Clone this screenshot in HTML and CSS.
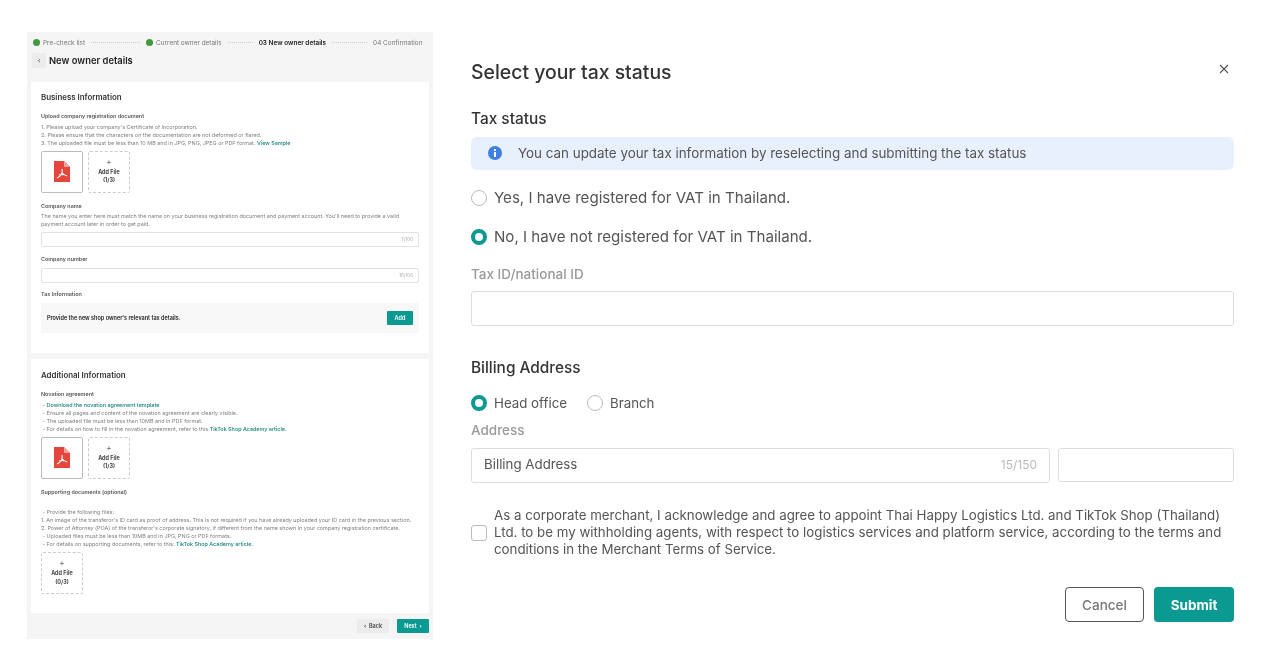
FILE: index.html

```html
<!DOCTYPE html>
<html lang="en">
<head>
  <meta charset="UTF-8">
  <title>Select your tax status</title>
  <link rel="stylesheet" href="styles.css">
</head>
<body>
  <div class="page">
    <section class="owner">
      <div class="steps">
        <span class="step done"><i class="tick"></i>Pre-check list</span>
        <span class="dots d1"></span>
        <span class="step done"><i class="tick"></i>Current owner details</span>
        <span class="dots d2"></span>
        <span class="step current">03 New owner details</span>
        <span class="dots d3"></span>
        <span class="step">04 Confirmation</span>
      </div>
      <div class="owner-head">
        <span class="back-box">‹</span>
        <h2>New owner details</h2>
      </div>

      <div class="card card-one">
        <h3>Business Information</h3>
        <p class="lbl up-lbl">Upload company registration document</p>
        <p class="hint">1. Please upload your company's Certificate of Incorporation.<br>2. Please ensure that the characters on the documentation are not deformed or flared.<br>3. The uploaded file must be less than 10 MB and in JPG, PNG, JPEG or PDF format. <a>View Sample</a></p>
        <div class="files">
          <div class="file">
            <svg class="pdf" viewBox="0 0 16 21"><path d="M0 0h10l6 6v15H0z" fill="#e5463b"/><path d="M10 0l6 6h-6z" fill="#f2a49d"/><path d="M8 8c.5 2 .5 3.5-.8 5.5S5 16.500 3 17M8.300 12c1 1.500 2.500 2.500 5 3M5 13.800h6" fill="none" stroke="#fff" stroke-width="1.100"/></svg>
          </div>
          <div class="add"><b>+</b><span>Add File<br>(1/3)</span></div>
        </div>
        <p class="lbl name-lbl">Company name</p>
        <p class="hint name-hint">The name you enter here must match the name on your business registration document and payment account. You'll need to provide a valid payment account later in order to get paid.</p>
        <div class="mini-input name-input"><span>7/100</span></div>
        <p class="lbl num-lbl">Company number</p>
        <div class="mini-input num-input"><span>16/100</span></div>
        <p class="lbl tax-lbl">Tax Information</p>
        <div class="tax-row">
          <span>Provide the new shop owner's relevant tax details.</span>
          <button class="mini-add">Add</button>
        </div>
      </div>

      <div class="card card-two">
        <h3>Additional Information</h3>
        <p class="lbl up-lbl">Novation agreement</p>
        <p class="hint">&nbsp;- <a>Download the novation agreement template</a><br>&nbsp;- Ensure all pages and content of the novation agreement are clearly visible.<br>&nbsp;- The uploaded file must be less than 10MB and in PDF format.<br>&nbsp;- For details on how to fill in the novation agreement, refer to this <a>TikTok Shop Academy article.</a></p>
        <div class="files">
          <div class="file">
            <svg class="pdf" viewBox="0 0 16 21"><path d="M0 0h10l6 6v15H0z" fill="#e5463b"/><path d="M10 0l6 6h-6z" fill="#f2a49d"/><path d="M8 8c.5 2 .5 3.5-.8 5.5S5 16.500 3 17M8.300 12c1 1.500 2.500 2.500 5 3M5 13.800h6" fill="none" stroke="#fff" stroke-width="1.100"/></svg>
          </div>
          <div class="add"><b>+</b><span>Add File<br>(1/3)</span></div>
        </div>
        <p class="lbl sup-lbl">Supporting documents (optional)</p>
        <p class="hint sup-hint">&nbsp;- Provide the following files:<br>1. An image of the transferor's ID card as proof of address. This is not required if you have already uploaded your ID card in the previous section.<br>2. Power of Attorney (POA) of the transferor's corporate signatory, if different from the name shown in your company registration certificate.<br>&nbsp;- Uploaded files must be less than 10MB and in JPG, PNG or PDF formats.<br>&nbsp;- For details on supporting documents, refer to this: <a>TikTok Shop Academy article.</a></p>
        <div class="files">
          <div class="add"><b>+</b><span>Add File<br>(0/3)</span></div>
        </div>
      </div>

      <div class="owner-foot">
        <button class="btn-back">‹&nbsp; Back</button>
        <button class="btn-next">Next &nbsp;›</button>
      </div>
    </section>

    <section class="modal">
      <div class="modal-head">
        <h1>Select your tax status</h1>
        <svg class="close" viewBox="0 0 10 10"><path d="M1 1l8 8M9 1l-8 8" stroke="#555" stroke-width="1.100" fill="none"/></svg>
      </div>
      <h4 class="tax-title">Tax status</h4>
      <div class="notice">
        <svg class="info" viewBox="0 0 14 14"><circle cx="7" cy="7" r="7" fill="#3d7fe6"/><rect x="6" y="6" width="2" height="5" fill="#fff"/><rect x="6" y="3" width="2" height="2" fill="#fff"/></svg>
        <span>You can update your tax information by reselecting and submitting the tax status</span>
      </div>
      <label class="radio-line yes"><i class="radio"></i>Yes, I have registered for VAT in Thailand.</label>
      <label class="radio-line no"><i class="radio on"></i>No, I have not registered for VAT in Thailand.</label>
      <p class="field-lbl id-lbl">Tax ID/national ID</p>
      <div class="input id-input"></div>
      <h4 class="bill-title">Billing Address</h4>
      <div class="office">
        <label class="radio-line"><i class="radio on"></i>Head office</label>
        <label class="radio-line"><i class="radio"></i>Branch</label>
      </div>
      <p class="field-lbl addr-lbl">Address</p>
      <div class="addr-row">
        <div class="input addr-main"><span>Billing Address</span><em>15/150</em></div>
        <div class="input addr-side"></div>
      </div>
      <div class="agree">
        <i class="check"></i>
        <p>As a corporate merchant, I acknowledge and agree to appoint Thai Happy Logistics Ltd. and TikTok Shop (Thailand) Ltd. to be my withholding agents, with respect to logistics services and platform service, according to the terms and conditions in the Merchant Terms of Service.</p>
      </div>
      <div class="actions">
        <button class="cancel">Cancel</button>
        <button class="submit">Submit</button>
      </div>
    </section>
  </div>
</body>
</html>
```

FILE: styles.css

```css
* {
  box-sizing: border-box;
}
body {
  margin: 0;
  background: #fff;
  font-family: Inter, "Liberation Sans", sans-serif;
  color: #333;
}
p, h1, h2, h3, h4 {
  margin: 0;
}
a {
  color: #0f7f7a;
  font-weight: 600;
}
.page {
  display: flex;
  align-items: flex-start;
  height: 671px;
  overflow: hidden;
  padding: 32px 0 0 27px;
  filter: blur(.3px);
}

/* left: shrunken screenshot of the wizard */
.owner {
  width: 406px;
  height: 607px;
  flex: none;
  background: #f5f5f5;
  padding: 0 4px;
  filter: blur(.2px);
}
.steps {
  display: flex;
  align-items: center;
  height: 21px;
  padding-left: 2px;
  font-size: 6.450px;
  color: #777;
}
.step {
  display: flex;
  align-items: center;
  white-space: nowrap;
}
.step.current {
  color: #222;
  font-weight: 600;
}
.tick {
  width: 7px;
  height: 7px;
  border-radius: 50%;
  background: #3f9a3c;
  margin-right: 3px;
}
.dots {
  border-top: 1px dotted #ccc;
  height: 0;
  margin: 0 6px;
}
.d1 { width: 49px; }
.d2 { width: 25px; }
.d3 { width: 35px; }
.owner-head {
  display: flex;
  align-items: center;
  height: 14px;
  gap: 3px;
  padding-left: 1px;
}
.back-box {
  width: 14px;
  height: 15px;
  background: #ececec;
  font-size: 7px;
  color: #555;
  text-align: center;
  line-height: 15px;
}
.owner-head h2 {
  font-size: 9.400px;
  font-weight: 600;
  color: #222;
}
.card {
  background: #fff;
  padding: 0 10px;
}
.card-one {
  height: 271px;
  margin-top: 15px;
  padding-top: 10px;
}
.card-two {
  height: 254px;
  margin-top: 6px;
  padding-top: 11px;
}
.card h3 {
  font-size: 7.900px;
  line-height: 10px;
  font-weight: 600;
  color: #333;
}
.lbl {
  font-size: 5.400px;
  line-height: 7px;
  color: #555;
  font-weight: 600;
}
.up-lbl { margin-top: 10.500px; }
.hint {
  font-size: 5.430px;
  line-height: 8.100px;
  color: #808080;
  margin-top: 3.500px;
}
.hint a {
  font-weight: 500;
}
.files {
  display: flex;
  gap: 5px;
  margin-top: 3.600px;
}
.file, .add {
  width: 42px;
  height: 42px;
  border-radius: 2px;
}
.file {
  display: flex;
  align-items: center;
  justify-content: center;
  border: 1px solid #bbb;
}
.pdf {
  width: 16px;
  height: 21px;
}
.add {
  border: 1px dashed #ccc;
  display: flex;
  flex-direction: column;
  align-items: center;
  padding-top: 6px;
  font-size: 5.500px;
  line-height: 8.500px;
  color: #444;
  text-align: center;
}
.add b {
  font-size: 9px;
  font-weight: 300;
  line-height: 7px;
  margin-bottom: 3px;
}
.add span {
  font-weight: 700;
}
.name-lbl { margin-top: 10.500px; }
.name-hint { margin-top: 1.500px; }
.mini-input {
  display: flex;
  align-items: center;
  justify-content: flex-end;
  height: 15px;
  border: 1px solid #e2e2e2;
  border-radius: 2px;
  padding-right: 5px;
  font-size: 4.500px;
  color: #aaa;
}
.name-input { margin-top: 3.800px; }
.num-lbl { margin-top: 9.500px; }
.num-input { margin-top: 4.500px; }
.tax-lbl { margin-top: 8.500px; }
.tax-row {
  display: flex;
  align-items: center;
  justify-content: space-between;
  height: 30px;
  margin-top: 4.500px;
  padding: 0 6px;
  background: #f8f8f8;
  font-size: 5.500px;
  font-weight: 600;
  color: #222;
}
.mini-add {
  width: 26px;
  height: 14px;
  border: 0;
  border-radius: 1px;
  background: #0a9a92;
  color: #fff;
  font: 600 5.500px Inter, sans-serif;
}
.sup-lbl { margin-top: 10.500px; }
.sup-hint { margin-top: 11.500px; }
.owner-foot {
  display: flex;
  justify-content: flex-end;
  gap: 8px;
  margin-top: 6px;
}
.owner-foot button {
  height: 14px;
  border: 0;
  border-radius: 1px;
  font: 600 5.500px Inter, sans-serif;
}
.btn-back {
  width: 32px;
  background: #ececec;
  color: #444;
}
.btn-next {
  width: 32px;
  background: #0a9a92;
  color: #fff;
}

/* right: tax status dialog */
.modal {
  width: 763px;
  margin-left: 38px;
  flex: none;
}
.modal-head {
  display: flex;
  align-items: center;
  justify-content: space-between;
  height: 24px;
  margin-top: 28px;
}
.modal-head h1 {
  font-size: 19.400px;
  font-weight: 500;
  color: #333;
}
.close {
  width: 10px;
  height: 10px;
  margin: 0 5px 7px 0;
}
h4 {
  font-size: 15.400px;
  line-height: 20px;
  font-weight: 500;
  color: #333;
}
.tax-title { margin-top: 25px; }
.notice {
  display: flex;
  align-items: center;
  height: 33px;
  margin-top: 8px;
  padding: 0 0 1px 17px;
  background: #e8f0fd;
  border-radius: 6px;
  font-size: 13.400px;
  color: #555;
}
.info {
  width: 14px;
  height: 14px;
  margin-right: 16px;
}
.radio-line {
  display: flex;
  align-items: center;
  font-size: 15.100px;
  line-height: 20px;
  color: #555;
}
.yes { margin-top: 18px; }
.no { margin-top: 19px; }
.radio {
  width: 16px;
  height: 16px;
  border: 1px solid #bbb;
  border-radius: 50%;
  margin-right: 7px;
  flex: none;
}
.radio.on {
  border: 4.500px solid #0a9a92;
}
.field-lbl {
  font-size: 13.500px;
  line-height: 18px;
  font-weight: 500;
  color: #999;
}
.id-lbl { margin-top: 18px; }
.input {
  border: 1px solid #ddd;
  border-radius: 3px;
  background: #fff;
}
.id-input {
  height: 35px;
  margin-top: 8px;
}
.bill-title { margin-top: 32px; }
.office {
  display: flex;
  gap: 20px;
  margin-top: 15px;
}
.office .radio-line {
  font-size: 13.300px;
}
.addr-lbl { margin-top: 8px; }
.addr-row {
  display: flex;
  align-items: flex-start;
  gap: 8px;
  margin-top: 9px;
}
.addr-main {
  display: flex;
  align-items: center;
  justify-content: space-between;
  flex: 1;
  height: 35px;
  padding: 0 12px 3px;
  font-size: 13.300px;
  color: #555;
}
.addr-main em {
  font-style: normal;
  font-size: 12px;
  color: #bbb;
}
.addr-side {
  width: 176px;
  height: 34px;
}
.agree {
  display: flex;
  align-items: center;
  gap: 7px;
  margin-top: 24px;
}
.check {
  width: 16px;
  height: 16px;
  flex: none;
  border: 1px solid #bbb;
  border-radius: 3px;
}
.agree p {
  font-size: 13.300px;
  line-height: 17px;
  color: #555;
}
.actions {
  display: flex;
  justify-content: flex-end;
  gap: 10px;
  margin-top: 29px;
}
.actions button {
  width: 79px;
  height: 35px;
  border-radius: 4px;
  font: 500 13.500px Inter, sans-serif;
}
.cancel {
  background: #fff;
  border: 1px solid #555;
  color: #777;
}
.actions .submit {
  width: 80px;
  background: #0a9a92;
  border: 0;
  color: #fff;
  font-weight: 700;
}
```
